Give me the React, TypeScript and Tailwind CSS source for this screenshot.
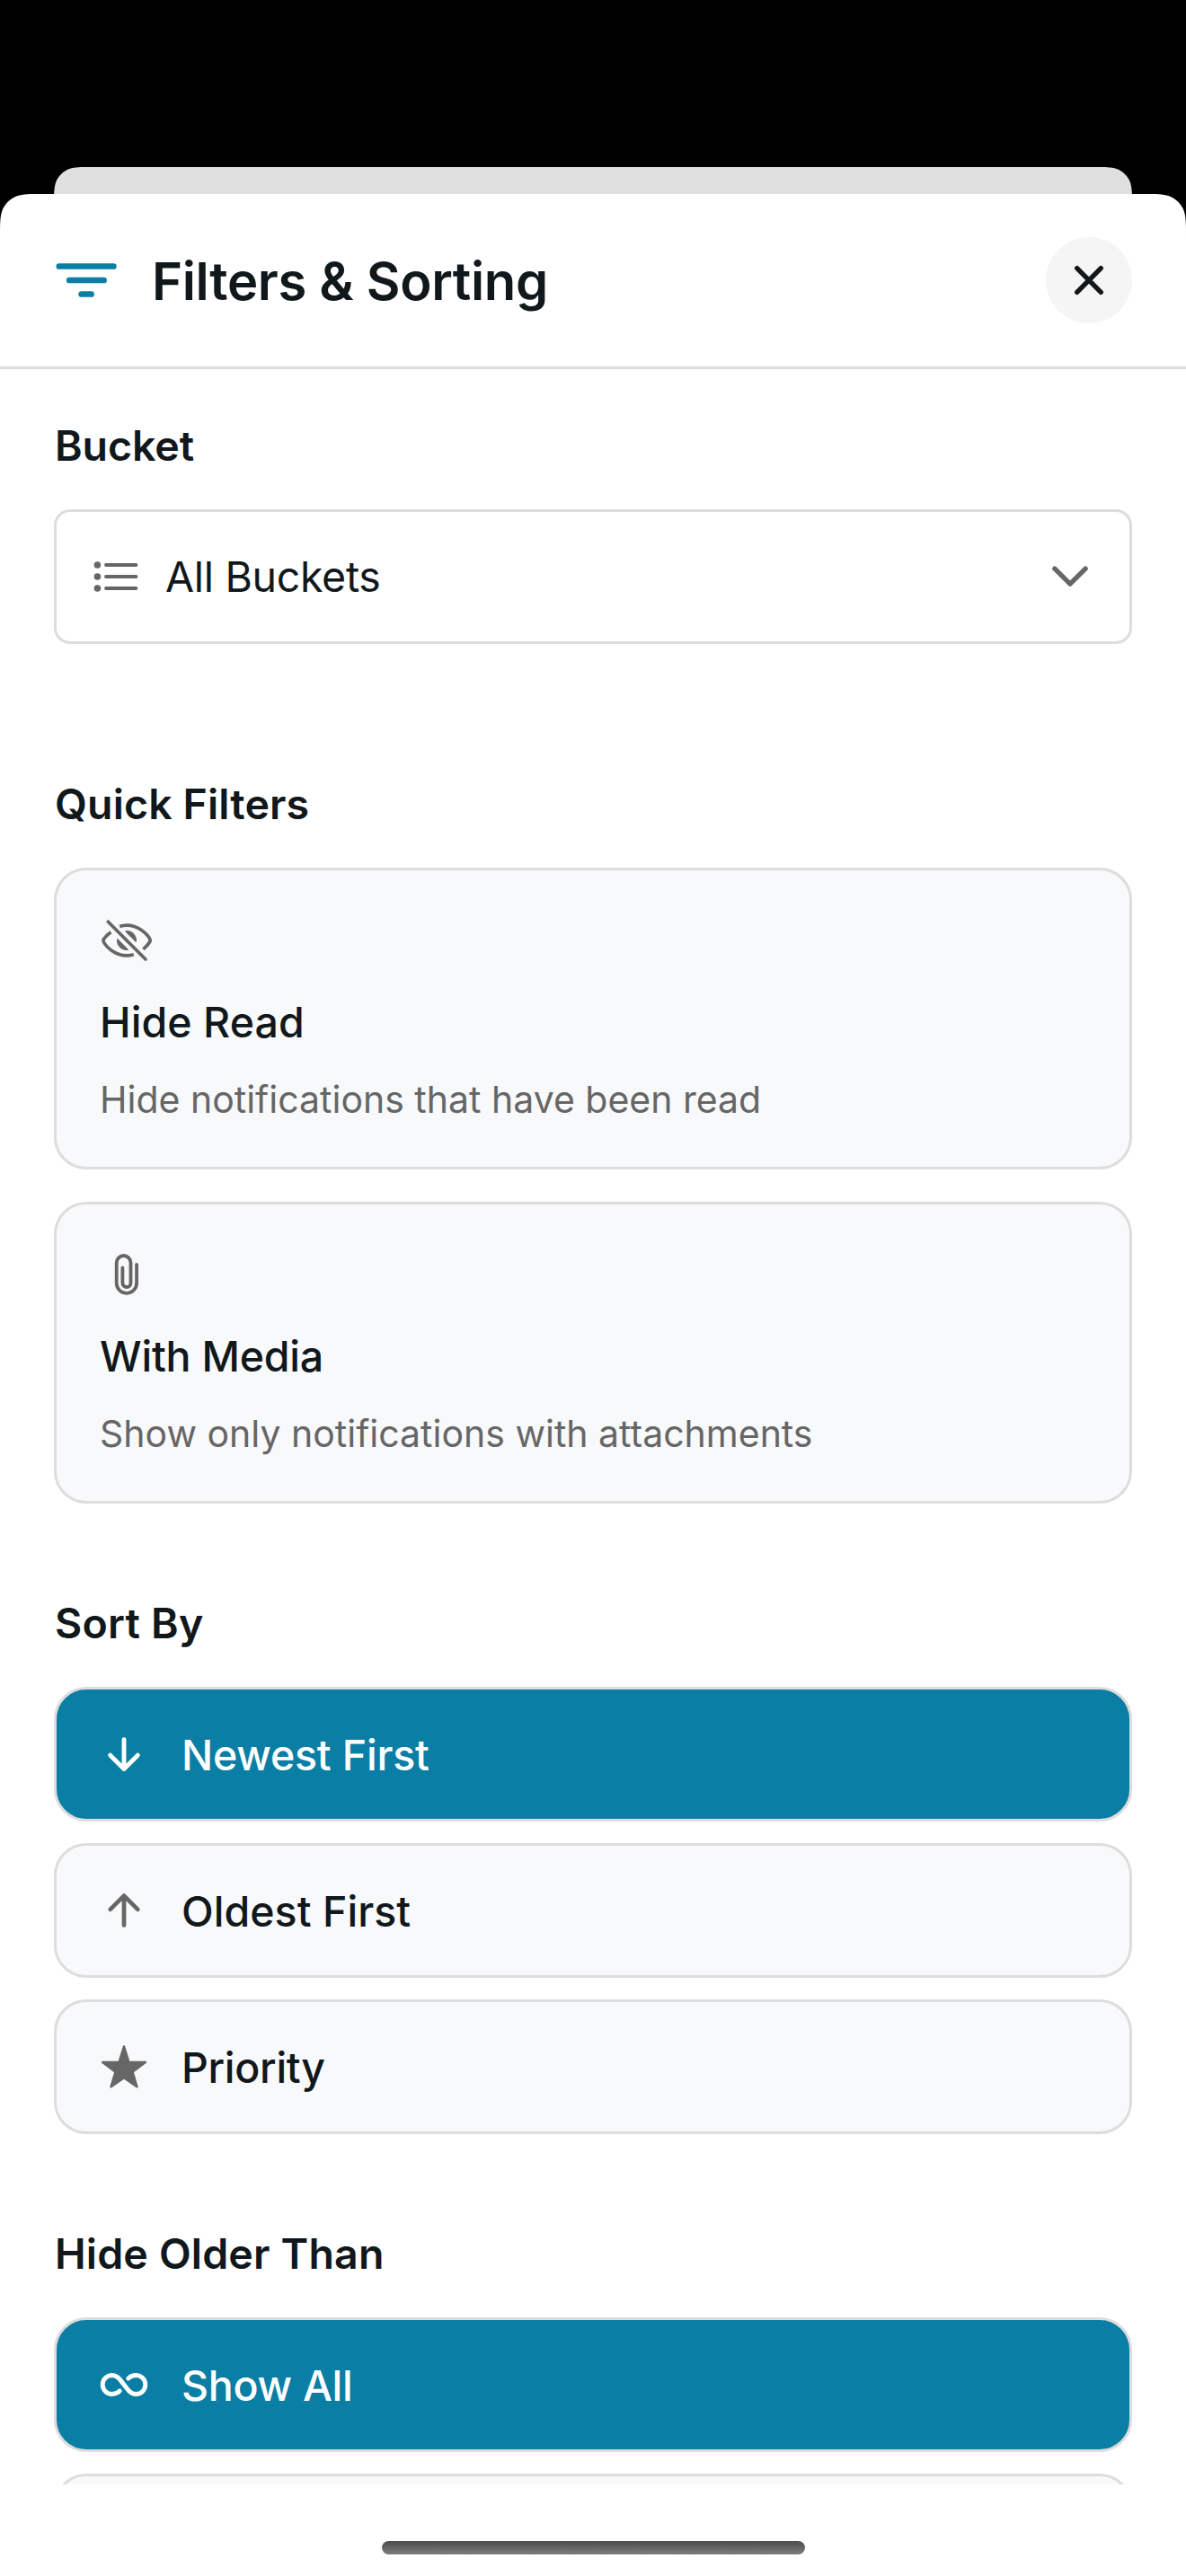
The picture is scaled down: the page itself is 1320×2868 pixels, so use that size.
import React, { type ReactNode } from 'react';

const stroke = {
  fill: 'none',
  stroke: 'currentColor',
  strokeLinecap: 'round',
  strokeLinejoin: 'round',
} as const;

function FilterIcon() {
  return (
    <svg className="h-[38px] w-[68px] shrink-0 text-[#0a7ea4]" viewBox="0 0 68 38" strokeWidth="6.7" {...stroke}>
      <path d="M3.8 3.5H64.4M15.2 19H53.6M28.6 34.5H39.6" />
    </svg>
  );
}

function CloseIcon() {
  return (
    <svg className="size-24" viewBox="0 0 96 96" strokeWidth="5.4" {...stroke}>
      <path d="M34.7 34.7L61.3 61.3M61.3 34.7L34.7 61.3" />
    </svg>
  );
}

function ListIcon() {
  return (
    <svg className="h-9 w-[50px] shrink-0 text-[#666]" viewBox="0 0 50 36" strokeWidth="3.9" {...stroke}>
      <path d="M14 5H47.4M14 18H47.4M14 31H47.4" />
      <g fill="currentColor" stroke="none">
        <circle cx="4.4" cy="5" r="3.8" />
        <circle cx="4.4" cy="18" r="3.8" />
        <circle cx="4.4" cy="31" r="3.8" />
      </g>
    </svg>
  );
}

function ChevronIcon() {
  return (
    <svg className="h-6 w-10 shrink-0 text-[#666]" viewBox="0 0 40 24" strokeWidth="5.4" {...stroke}>
      <path d="M2.9 3.2L20 20.2L37.1 3.2" />
    </svg>
  );
}

function EyeSlashIcon() {
  return (
    <svg className="size-[60px] text-[#666]" viewBox="0 0 60 60" strokeWidth="3.7" {...stroke} strokeLinecap="butt">
      <path d="M9.3 9.2L51 51" strokeLinecap="round" />
      <path d="M22.2 14.5C24.6 13.6 27.2 13.1 30 13.1C42.5 13.1 52.6 22.4 55.8 28.4Q56.7 30 55.8 31.5C54.3 34 51.9 36.9 48.4 39.8" />
      <path d="M12.4 20.8C8.6 23.6 5.8 26.6 4.3 28.7Q3.5 30 4.3 31.5C7.4 37.6 17.2 46.9 30 46.9C32.8 46.9 35.4 46.5 37.8 45.8" />
      <g fill="currentColor" stroke="none">
        <path d="M28.4 20.2Q27.8 19.2 30 19A11 11 0 0 1 41 30Q40.9 32.6 39.9 31.7Z" />
        <path d="M19.9 28Q19 27.4 19 30A11 11 0 0 0 30 41Q32.6 41 31.9 40Z" />
      </g>
    </svg>
  );
}

function PaperclipIcon() {
  return (
    <svg className="size-[60px] text-[#666]" viewBox="0 0 60 60" strokeWidth="3.8" {...stroke}>
      <path d="M41.1 19V39.6A11.2 11.2 0 0 1 18.7 39.6V17A7.9 8 0 0 1 34.5 17V39.2A4.55 4.8 0 0 1 25.4 39.2V22.4" />
    </svg>
  );
}

function ArrowDownIcon() {
  return (
    <svg className="size-[60px] shrink-0 text-white" viewBox="0 0 60 60" strokeWidth="4.9" {...stroke}>
      <path d="M30 13.6V46M14.7 31.2L30 46.4L45.3 31.2" />
    </svg>
  );
}

function ArrowUpIcon() {
  return (
    <svg className="size-[60px] shrink-0 text-[#666]" viewBox="0 0 60 60" strokeWidth="4.7" {...stroke}>
      <path d="M30 46.4V14M14.7 28.8L30 13.6L45.3 28.8" />
    </svg>
  );
}

function StarIcon() {
  return (
    <svg className="size-[60px] shrink-0 text-[#666]" viewBox="0 0 60 60" strokeWidth="2.6" {...stroke} fill="currentColor">
      <path d="M30 7.6L35.3 24.7L53.8 25L39.5 35.8L44.4 52.3L30 42.1L15.6 52.3L20.5 35.8L6.2 25L24.7 24.7Z" />
    </svg>
  );
}

function InfinityIcon() {
  return (
    <svg className="size-[60px] shrink-0 text-white" viewBox="0 0 60 60" strokeWidth="4.9" {...stroke}>
      <path d="M25.3 36.9C23 39.3 20 40.5 16.7 40.5A10.5 10.5 0 0 1 16.7 19.5C22.4 19.5 25.7 24.2 30 30C34.3 35.8 37.6 40.5 43.3 40.5A10.5 10.5 0 0 0 43.3 19.5C40 19.5 37 20.7 34.7 23.1" />
    </svg>
  );
}

function Heading({ className, children }: { className: string; children: ReactNode }) {
  return (
    <h2 className={`mb-[42px] pl-px text-[46.5px] leading-[58px] font-semibold ${className}`}>{children}</h2>
  );
}

function FilterCard({ icon, title, titleClass, text }: { icon: ReactNode; title: string; titleClass: string; text: string }) {
  return (
    <div className="flex h-[336px] flex-col rounded-[36px] border-3 border-[#ddd] bg-[#f8f9fb] px-12 pt-12">
      {icon}
      <h3 className={`mt-8 text-[46.5px] leading-[58px] font-medium ${titleClass}`}>{title}</h3>
      <p className="mt-8 text-[41px] leading-[50px] text-[#666]">{text}</p>
    </div>
  );
}

function OptionRow({ icon, label, labelClass, active }: { icon?: ReactNode; label?: string; labelClass?: string; active?: boolean }) {
  return (
    <div
      className={`flex h-[150px] shrink-0 items-center gap-[34px] rounded-[36px] border-3 border-[#ddd] px-[45px] ${
        active ? 'bg-[#0a7ea4] text-white' : 'bg-[#f8f9fb]'
      }`}
    >
      {icon}
      <span className={`pt-[2px] text-[46.5px] leading-[58px] font-medium ${labelClass ?? ''}`}>{label}</span>
    </div>
  );
}

export default function App() {
  return (
    <div className="flex h-[2868px] w-[1320px] flex-col overflow-hidden bg-black pt-[186px] font-['Inter',sans-serif] text-[#11181c]">
      <div className="mx-[60px] h-[30px] shrink-0 bg-[#e0e0e0] [clip-path:path('M0_41.7C0_29.7_0_23.7_2.04_17.2C4.61_10.2_10.2_4.61_17.2_2.04C23.7_0_29.7_0_41.7_0H1158.3C1170.3_0_1176.3_0_1182.8_2.04C1189.8_4.61_1195.4_10.2_1198_17.2C1200_23.7_1200_29.7_1200_41.7Z')]" />
      <div className="flex min-h-0 flex-1 flex-col bg-white [clip-path:path('M0_45.9C0_32.7_0_26_2.25_18.9C5.07_11.2_11.2_5.07_18.9_2.25C26_0_32.7_0_45.9_0H1274.1C1287.3_0_1294_0_1301.1_2.25C1308.8_5.07_1314.9_11.2_1317.8_18.9C1320_26_1320_32.7_1320_45.9V2652H0Z')]">
        <header className="flex h-[195px] shrink-0 items-center border-b-3 border-[#ddd] pr-[60px] pl-[62px]">
          <FilterIcon />
          <h1 className="mt-px ml-[39px] flex-1 text-[58px] leading-[72px] font-semibold tracking-[-0.33px]">
            Filters &amp; Sorting
          </h1>
          <button className="size-24 rounded-full bg-[#f5f5f5]" aria-label="Close">
            <CloseIcon />
          </button>
        </header>

        <main className="h-[2355px] shrink-0 overflow-hidden px-[60px] pt-14">
          <section>
            <Heading className="tracking-[-0.09px]">Bucket</Heading>
            <div className="flex h-[150px] items-center rounded-[18px] border-3 border-[#ddd] pr-[46px] pl-[41px]">
              <ListIcon />
              <span className="ml-[30px] flex-1 text-[46.5px] leading-[58px] tracking-[-0.32px]">All Buckets</span>
              <ChevronIcon />
            </div>
          </section>

          <section className="mt-[149px]">
            <Heading className="tracking-[0.12px]">Quick Filters</Heading>
            <div className="flex flex-col gap-9">
              <FilterCard
                icon={<EyeSlashIcon />}
                title="Hide Read"
                titleClass="tracking-[0.06px]"
                text="Hide notifications that have been read"
              />
              <FilterCard
                icon={<PaperclipIcon />}
                title="With Media"
                titleClass="tracking-[-0.23px]"
                text="Show only notifications with attachments"
              />
            </div>
          </section>

          <section className="mt-[104px]">
            <Heading className="tracking-[0.22px]">Sort By</Heading>
            <div className="flex flex-col gap-6">
              <OptionRow active icon={<ArrowDownIcon />} label="Newest First" labelClass="tracking-[-0.2px]" />
              <OptionRow icon={<ArrowUpIcon />} label="Oldest First" labelClass="tracking-[0.04px]" />
              <OptionRow icon={<StarIcon />} label="Priority" labelClass="tracking-[-0.28px]" />
            </div>
          </section>

          <section className="mt-[104px]">
            <Heading className="tracking-[0.17px]">Hide Older Than</Heading>
            <div className="flex flex-col gap-6">
              <OptionRow active icon={<InfinityIcon />} label="Show All" labelClass="tracking-[-0.28px]" />
              <OptionRow />
            </div>
          </section>
        </main>

        <div className="mt-[63px] ml-[425px] h-[15px] w-[471px] shrink-0 rounded-full bg-linear-to-b from-[#4c4c4c] to-[#7e7e7e]" />
      </div>
    </div>
  );
}
